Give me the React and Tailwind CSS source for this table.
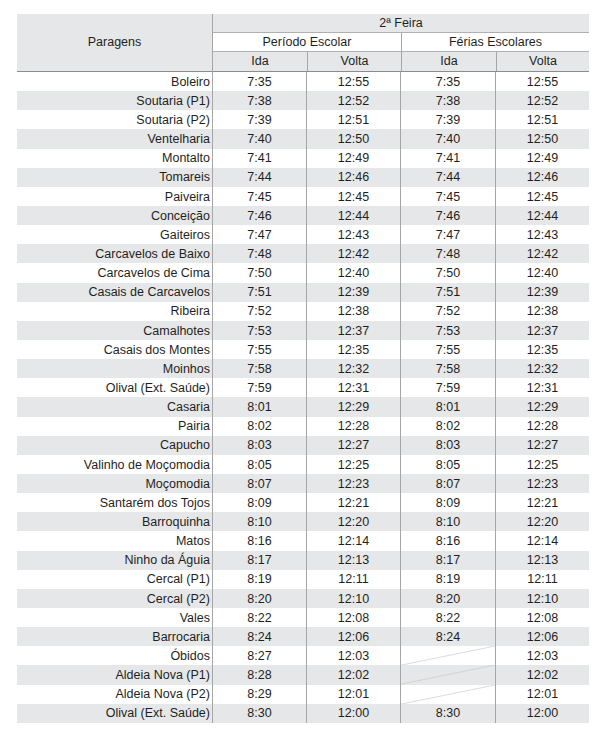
import React from 'react';

const rows = [
  ['Boleiro', '7:35', '12:55', '7:35', '12:55'],
  ['Soutaria (P1)', '7:38', '12:52', '7:38', '12:52'],
  ['Soutaria (P2)', '7:39', '12:51', '7:39', '12:51'],
  ['Ventelharia', '7:40', '12:50', '7:40', '12:50'],
  ['Montalto', '7:41', '12:49', '7:41', '12:49'],
  ['Tomareis', '7:44', '12:46', '7:44', '12:46'],
  ['Paiveira', '7:45', '12:45', '7:45', '12:45'],
  ['Conceição', '7:46', '12:44', '7:46', '12:44'],
  ['Gaiteiros', '7:47', '12:43', '7:47', '12:43'],
  ['Carcavelos de Baixo', '7:48', '12:42', '7:48', '12:42'],
  ['Carcavelos de Cima', '7:50', '12:40', '7:50', '12:40'],
  ['Casais de Carcavelos', '7:51', '12:39', '7:51', '12:39'],
  ['Ribeira', '7:52', '12:38', '7:52', '12:38'],
  ['Camalhotes', '7:53', '12:37', '7:53', '12:37'],
  ['Casais dos Montes', '7:55', '12:35', '7:55', '12:35'],
  ['Moinhos', '7:58', '12:32', '7:58', '12:32'],
  ['Olival (Ext. Saúde)', '7:59', '12:31', '7:59', '12:31'],
  ['Casaria', '8:01', '12:29', '8:01', '12:29'],
  ['Pairia', '8:02', '12:28', '8:02', '12:28'],
  ['Capucho', '8:03', '12:27', '8:03', '12:27'],
  ['Valinho de Moçomodia', '8:05', '12:25', '8:05', '12:25'],
  ['Moçomodia', '8:07', '12:23', '8:07', '12:23'],
  ['Santarém dos Tojos', '8:09', '12:21', '8:09', '12:21'],
  ['Barroquinha', '8:10', '12:20', '8:10', '12:20'],
  ['Matos', '8:16', '12:14', '8:16', '12:14'],
  ['Ninho da Águia', '8:17', '12:13', '8:17', '12:13'],
  ['Cercal (P1)', '8:19', '12:11', '8:19', '12:11'],
  ['Cercal (P2)', '8:20', '12:10', '8:20', '12:10'],
  ['Vales', '8:22', '12:08', '8:22', '12:08'],
  ['Barrocaria', '8:24', '12:06', '8:24', '12:06'],
  ['Óbidos', '8:27', '12:03', null, '12:03'],
  ['Aldeia Nova (P1)', '8:28', '12:02', null, '12:02'],
  ['Aldeia Nova (P2)', '8:29', '12:01', null, '12:01'],
  ['Olival (Ext. Saúde)', '8:30', '12:00', '8:30', '12:00'],
];

// empty cells get a thin diagonal stroke
function Crossed() {
  return (
    <svg className="absolute inset-0 w-full h-full" preserveAspectRatio="none" viewBox="0 0 100 20">
      <line x1="0" y1="20" x2="100" y2="0" stroke="#c4c4c4" strokeWidth="0.6" vectorEffect="non-scaling-stroke" />
    </svg>
  );
}

export default function App() {
  return (
    <div
      className="w-[606px] h-[740px] bg-white pt-[14px] pl-[17px] text-[12.5px] text-[#1f1f1f]"
      style={{ fontFamily: '"Liberation Sans", Arial, sans-serif' }}
    >
      <div className="w-[572px]">
        {/* Header */}
        <div className="flex">
          <div className="w-[195px] h-[58px] bg-[#e6e7e8] border-b border-[#8c8c8c] flex items-center justify-center">
            Paragens
          </div>
          <div className="flex-1 flex flex-col border-l border-[#a6a6a6]">
            <div className="h-[19px] bg-[#e6e7e8] border-b border-[#b0b0b0] flex items-center justify-center">
              2ª Feira
            </div>
            <div className="h-[19px] bg-white border-b border-[#b0b0b0] flex">
              <div className="w-[188px] flex items-center justify-center">Período Escolar</div>
              <div className="flex-1 border-l border-[#a6a6a6] flex items-center justify-center">Férias Escolares</div>
            </div>
            <div className="h-[20px] bg-[#e6e7e8] border-b border-[#8c8c8c] flex">
              <div className="w-[94px] flex items-center justify-center">Ida</div>
              <div className="w-[94px] border-l border-[#a6a6a6] flex items-center justify-center">Volta</div>
              <div className="w-[95px] border-l border-[#a6a6a6] flex items-center justify-center">Ida</div>
              <div className="flex-1 border-l border-[#a6a6a6] flex items-center justify-center">Volta</div>
            </div>
          </div>
        </div>

        {/* Body */}
        {rows.map((r, i) => (
          <div key={i} className={`flex h-[19.15px] ${i % 2 === 1 ? 'bg-[#e6e7e8]' : 'bg-white'}`}>
            <div className="w-[195px] flex items-center justify-end pr-[2px] pt-px">{r[0]}</div>
            <div className="w-[94px] border-l border-[#a6a6a6] flex items-center justify-center pt-px">{r[1]}</div>
            <div className="w-[94px] border-l border-[#a6a6a6] flex items-center justify-center pt-px">{r[2]}</div>
            <div className="w-[95px] border-l border-[#a6a6a6] flex items-center justify-center pt-px relative">
              {r[3] === null ? <Crossed /> : r[3]}
            </div>
            <div className="flex-1 border-l border-[#a6a6a6] flex items-center justify-center pt-px">{r[4]}</div>
          </div>
        ))}
      </div>
    </div>
  );
}
